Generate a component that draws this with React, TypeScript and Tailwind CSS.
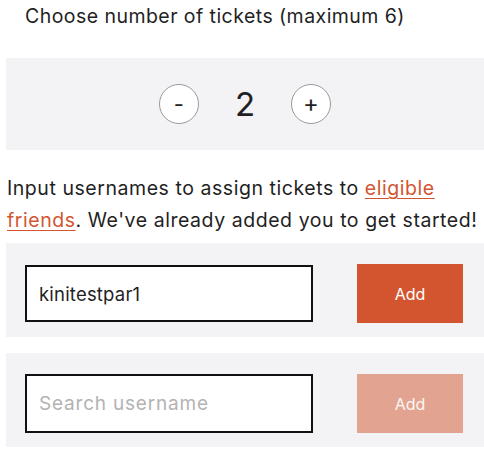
import React, { useState } from 'react';

export default function App() {
  const [count, setCount] = useState(2);
  const [search, setSearch] = useState('');

  return (
    <div className="w-[484px] h-[450px] bg-white overflow-hidden text-[#1f1f24]" style={{ fontFamily: 'Inter, "Liberation Sans", sans-serif' }}>
      <p className="pl-[25px] text-[19.5px] leading-[32px] tracking-[0.45px]">Choose number of tickets (maximum 6)</p>

      {/* ticket counter */}
      <div className="ml-[6px] mt-[26px] h-[92px] bg-[#f3f2f5] flex items-center justify-center">
        <button
          onClick={() => setCount(Math.max(1, count - 1))}
          className="w-[40px] h-[40px] rounded-full bg-white border border-[#9a9a9a] flex items-center justify-center text-[22px] leading-none"
        >
          -
        </button>
        <span className="mx-[36px] text-[33px] leading-none">{count}</span>
        <button
          onClick={() => setCount(Math.min(6, count + 1))}
          className="w-[40px] h-[40px] rounded-full bg-white border border-[#9a9a9a] flex items-center justify-center text-[24px] leading-none"
        >
          +
        </button>
      </div>

      <p className="pl-[7px] mt-[22px] text-[19.5px] leading-[32px] tracking-[0.55px]">
        Input usernames to assign tickets to{' '}
        <a href="#" className="text-[#d35530] underline underline-offset-[3px] decoration-1">eligible friends</a>. We've already added you to get started!
      </p>

      {/* assigned user */}
      <div className="ml-[6px] mt-[7px] pt-[21px] pb-[14px] pl-[19px] bg-[#f3f2f5] flex items-center">
        <input
          readOnly
          value="kinitestpar1"
          className="w-[288px] h-[57px] border-2 border-[#111] bg-white px-[12px] text-[18.5px] tracking-[0.2px] outline-none"
        />
        <button className="ml-[44px] w-[106px] h-[59px] bg-[#d35530] text-white text-[16px]">Add</button>
      </div>

      {/* new user */}
      <div className="ml-[6px] mt-[16px] pt-[21px] pb-[14px] pl-[19px] bg-[#f3f2f5] flex items-center">
        <input
          value={search}
          onChange={(e) => setSearch(e.target.value)}
          placeholder="Search username"
          className="w-[288px] h-[59px] border-2 border-[#111] bg-white px-[12px] text-[19px] outline-none placeholder:text-[#b3b3b3] placeholder:tracking-[0.8px]"
        />
        <button className="ml-[44px] w-[106px] h-[59px] bg-[#e2a390] text-white/90 text-[16px]">Add</button>
      </div>
    </div>
  );
}
